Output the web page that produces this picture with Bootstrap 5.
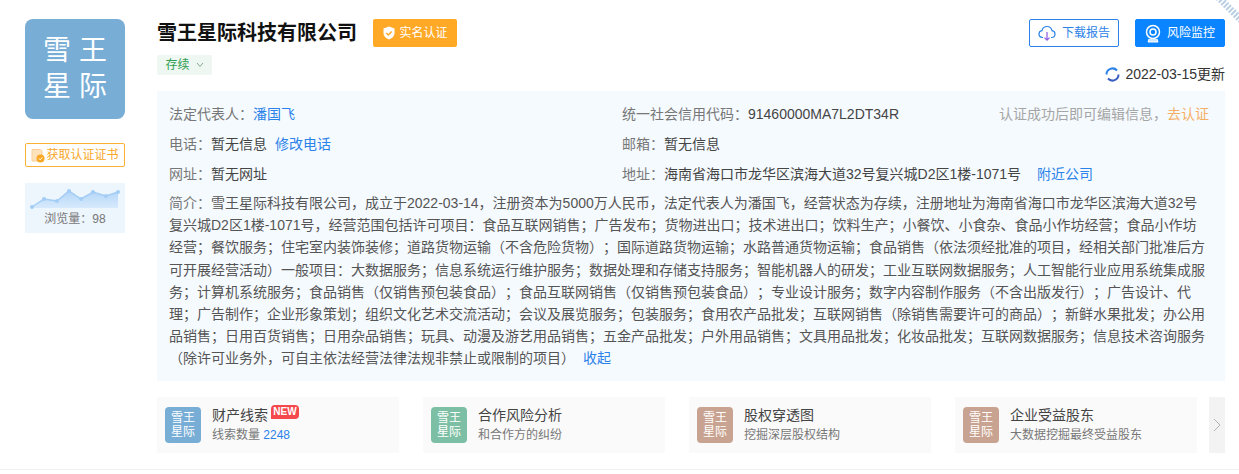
<!DOCTYPE html>
<html lang="zh-CN">
<head>
<meta charset="UTF-8" />
<title>雪王星际科技有限公司</title>
<meta name="viewport" content="width=device-width, initial-scale=1" />
<link href="https://cdn.jsdelivr.net/npm/bootstrap@5.3.0/dist/css/bootstrap.min.css" rel="stylesheet" />
<style>
  body { font-family: "Liberation Sans", "Noto Sans CJK SC", sans-serif; font-size: 14px; color: #444; background: #fff; overflow: hidden; text-spacing-trim: space-all; }
  a { color: #2b82e8; text-decoration: none; }
  .page-wrap { padding: 19px 14px 0 25px; gap: 32px; height: 470px; border-bottom: 1px solid #f0f0f0; }
  .side-col { width: 100px; flex: none; }
  .main-col { min-width: 0; }
  .co-logo { width: 100px; height: 100px; border-radius: 8px; background: #78add6; color: #fff; font-size: 28px; line-height: 36px; }
  .cert-btn { margin-top: 24px; height: 24px; border: 1px solid #f9b233; border-radius: 2px; color: #f9a825; font-size: 12px; background: #fff; gap: 1px; }
  .view-box { margin-top: 16px; height: 50px; background: #edf5fd; font-size: 12px; color: #777; }
  .view-box svg { display: block; }
  .head-row { height: 72px; }
  .co-title { font-size: 20px; font-weight: 700; color: #111; line-height: 28px; margin: 0; }
  .real-tag { width: 84px; height: 28px; background: #ffa927; border-radius: 2px; color: #fff; font-size: 12px; margin-left: 16px; gap: 3px; }
  .state-tag { width: 55px; height: 20px; margin-top: 8px; background: #eef7f1; color: #2f9e52; font-size: 12px; gap: 6px; border-radius: 2px; }
  .act-btn { width: 90px; height: 28px; padding: 0; border-radius: 2px; font-size: 12px; gap: 6px; }
  .act-line { color: #2b82e8; border: 1px solid #2b82e8; background: #fff; }
  .act-fill { color: #fff; border: 1px solid #0a84ff; background: #0a84ff; }
  .act-line:hover { color: #2b82e8; background: #fff; border-color: #2b82e8; }
  .act-fill:hover { color: #fff; background: #0a84ff; border-color: #0a84ff; }
  .update-line { margin-top: 17px; line-height: 20px; font-size: 14px; gap: 5px; color: #333; }
  .info-panel { height: 290px; background: #f5faff; padding: 8px 16px 0 12px; }
  .info-row { height: 30px; line-height: 30px; }
  .info-left { width: 453px; flex: none; }
  .lbl { color: #777; }
  .edit-hint { color: #a5a5a5; }
  .edit-hint span { color: #f5b066; }
  .intro-text { line-height: 22.2px; margin-top: 3px; color: #555; white-space: nowrap; }
  .tool-row { margin-top: 16px; gap: 24px; }
  .tool-card { width: 242px; height: 56px; background: #fafafa; padding-left: 8px; gap: 11px; position: relative; }
  .mini-logo { width: 36px; height: 36px; flex: none; border-radius: 4px; color: #fff; font-size: 12px; line-height: 14.5px; text-align: center; }
  .tone-blue { background: #78add6; }
  .tone-green { background: #7dbfa4; }
  .tone-tan { background: #c9a391; }
  .tool-name { font-size: 14px; line-height: 20px; color: #444; }
  .tool-sub { font-size: 12px; line-height: 20px; color: #777; }
  .new-flag { position: absolute; left: 114px; top: 8px; width: 28px; height: 14px; background: #f4484d; color: #fff; font-size: 10px; font-weight: 700; line-height: 14px; text-align: center; border-radius: 4px 4px 4px 0; }
  .more-arrow { width: 16px; height: 56px; margin-left: -12px; background: #f3f3f3; }
  .stamp { position: absolute; right: -6px; top: -6px; }
</style>
</head>
<body>
  <svg class="stamp" width="30" height="30" viewBox="0 0 30 30"><path d="M3 3 L27 27" stroke="#b9cfe4" stroke-width="7" stroke-dasharray="2 1.5" fill="none"/></svg>

  <div class="page-wrap d-flex">
    <!-- 左侧 logo -->
    <div class="side-col">
      <div class="co-logo d-flex flex-column align-items-center justify-content-center"><div>雪 王</div><div>星 际</div></div>
      <div class="cert-btn d-flex align-items-center justify-content-center">
        <svg width="14" height="15" viewBox="0 0 14 15"><path d="M1 1.500 h8.500 l1.500 1.500 v10 h-10 z" fill="#fde3bd" stroke="#f9cf94"/><circle cx="9.500" cy="10.500" r="4" fill="#f9a825"/><path d="M7.800 10.500 l1.300 1.300 l2.200 -2.300" stroke="#fff" fill="none"/></svg>
        <span>获取认证证书</span>
      </div>
      <div class="view-box text-center">
        <svg width="100" height="27" viewBox="0 0 100 27">
          <defs><linearGradient id="areaFill" x1="0" y1="0" x2="0" y2="1"><stop offset="0" stop-color="#b3d6f8"/><stop offset="1" stop-color="#d8eafc"/></linearGradient></defs>
          <path d="M7 24 L19 16 L32 18 L44 8 L56 16 L68 9 L81 13 L93 9 V25 H7 Z" fill="url(#areaFill)"/>
          <path d="M7 24 L19 16 L32 18 L44 8 L56 16 L68 9 L81 13 L93 9" fill="none" stroke="#a3cdf5" stroke-width="1.500"/>
          <g fill="#a3cdf5"><circle cx="7" cy="24" r="2"/><circle cx="19" cy="16" r="2"/><circle cx="32" cy="18" r="2"/><circle cx="44" cy="8" r="2"/><circle cx="56" cy="16" r="2"/><circle cx="68" cy="9" r="2"/><circle cx="81" cy="13" r="2"/><circle cx="93" cy="9" r="2"/></g>
        </svg>
        <div>浏览量：98</div>
      </div>
    </div>

    <div class="main-col flex-grow-1">
      <!-- 标题 -->
      <div class="head-row d-flex justify-content-between">
        <div>
          <div class="d-flex align-items-center">
            <h1 class="co-title">雪王星际科技有限公司</h1>
            <div class="real-tag d-flex align-items-center justify-content-center">
              <svg width="14" height="14" viewBox="0 0 14 14"><path d="M7 .5 L12.500 2.500 V7 C12.500 10.500 9.500 12.500 7 13.500 C4.500 12.500 1.500 10.500 1.500 7 V2.500 Z" fill="#fff"/><path d="M4.300 7 l2 2 l3.400 -3.600" stroke="#ffa927" stroke-width="1.500" fill="none"/></svg>
              <span>实名认证</span>
            </div>
          </div>
          <div class="state-tag d-flex align-items-center justify-content-center">
            <span>存续</span>
            <svg width="8" height="6" viewBox="0 0 8 6"><path d="M1 1 L4 4.500 L7 1" stroke="#7fa98d" fill="none"/></svg>
          </div>
        </div>
        <div>
          <div class="d-flex justify-content-end gap-3">
            <button class="btn act-btn act-line d-flex align-items-center justify-content-center">
              <svg width="18" height="17" viewBox="0 0 18 17"><path d="M5 12.500 H4.500 C2.500 12.500 1 11 1 9 C1 7.200 2.300 5.800 4 5.600 C4.500 3.200 6.500 1.500 9 1.500 C11.500 1.500 13.500 3.200 14 5.600 C15.700 5.800 17 7.200 17 9 C17 11 15.500 12.500 13.500 12.500 H13" stroke="#2b82e8" stroke-width="1.200" fill="none"/><path d="M9 7 V15 M6.500 12.700 L9 15.200 L11.500 12.700" stroke="#8a5ce0" stroke-width="1.200" fill="none"/></svg>
              <span>下载报告</span>
            </button>
            <button class="btn act-btn act-fill d-flex align-items-center justify-content-center">
              <svg width="16" height="19" viewBox="0 0 16 19"><circle cx="8" cy="8" r="6.500" fill="none" stroke="#fff" stroke-width="1.500"/><circle cx="8" cy="8" r="3" fill="none" stroke="#fff" stroke-width="1.500"/><path d="M4 15 L3 18 H13 L12 15" fill="#cfe6ff" stroke="#fff"/></svg>
              <span>风险监控</span>
            </button>
          </div>
          <div class="update-line d-flex justify-content-end align-items-center">
            <svg width="15" height="15" viewBox="0 0 15 15"><path d="M1.500 7.500 A6 6 0 0 1 12 3.500" stroke="#2b82e8" stroke-width="2" fill="none"/><path d="M13.500 7.500 A6 6 0 0 1 3 11.500" stroke="#3b5fc0" stroke-width="2" fill="none"/></svg>
            <span>2022-03-15更新</span>
          </div>
        </div>
      </div>

      <!-- 基本信息 -->
      <div class="info-panel">
        <div class="info-row d-flex">
          <div class="info-left"><span class="lbl">法定代表人：</span><a href="#">潘国飞</a></div>
          <div class="flex-grow-1"><span class="lbl">统一社会信用代码：</span>91460000MA7L2DT34R</div>
          <div class="edit-hint">认证成功后即可编辑信息，<span>去认证</span></div>
        </div>
        <div class="info-row d-flex">
          <div class="info-left"><span class="lbl">电话：</span>暂无信息<a href="#" class="ms-2">修改电话</a></div>
          <div class="flex-grow-1"><span class="lbl">邮箱：</span>暂无信息</div>
        </div>
        <div class="info-row d-flex">
          <div class="info-left"><span class="lbl">网址：</span>暂无网址</div>
          <div class="flex-grow-1"><span class="lbl">地址：</span>海南省海口市龙华区滨海大道32号复兴城D2区1楼-1071号<a href="#" class="addr-link ms-3">附近公司</a></div>
        </div>
        <div class="intro-text">
          <span class="lbl">简介：</span>雪王星际科技有限公司，成立于2022-03-14，注册资本为5000万人民币，法定代表人为潘国飞，经营状态为存续，注册地址为海南省海口市龙华区滨海大道32号<br>
          复兴城D2区1楼-1071号，经营范围包括许可项目：食品互联网销售；广告发布；货物进出口；技术进出口；饮料生产；小餐饮、小食杂、食品小作坊经营；食品小作坊<br>
          经营；餐饮服务；住宅室内装饰装修；道路货物运输（不含危险货物）；国际道路货物运输；水路普通货物运输；食品销售（依法须经批准的项目，经相关部门批准后方<br>
          可开展经营活动）一般项目：大数据服务；信息系统运行维护服务；数据处理和存储支持服务；智能机器人的研发；工业互联网数据服务；人工智能行业应用系统集成服<br>
          务；计算机系统服务；食品销售（仅销售预包装食品）；食品互联网销售（仅销售预包装食品）；专业设计服务；数字内容制作服务（不含出版发行）；广告设计、代<br>
          理；广告制作；企业形象策划；组织文化艺术交流活动；会议及展览服务；包装服务；食用农产品批发；互联网销售（除销售需要许可的商品）；新鲜水果批发；办公用<br>
          品销售；日用百货销售；日用杂品销售；玩具、动漫及游艺用品销售；五金产品批发；户外用品销售；文具用品批发；化妆品批发；互联网数据服务；信息技术咨询服务<br>
          （除许可业务外，可自主依法经营法律法规非禁止或限制的项目）<a href="#" class="ms-2">收起</a>
        </div>
      </div>

      <!-- 工具入口 -->
      <div class="tool-row d-flex">
        <div class="tool-card d-flex align-items-center">
          <div class="mini-logo tone-blue d-flex align-items-center justify-content-center">雪王<br>星际</div>
          <div><div class="tool-name">财产线索</div><div class="tool-sub">线索数量 <a href="#">2248</a></div></div>
          <span class="new-flag">NEW</span>
        </div>
        <div class="tool-card d-flex align-items-center">
          <div class="mini-logo tone-green d-flex align-items-center justify-content-center">雪王<br>星际</div>
          <div><div class="tool-name">合作风险分析</div><div class="tool-sub">和合作方的纠纷</div></div>
        </div>
        <div class="tool-card d-flex align-items-center">
          <div class="mini-logo tone-tan d-flex align-items-center justify-content-center">雪王<br>星际</div>
          <div><div class="tool-name">股权穿透图</div><div class="tool-sub">挖掘深层股权结构</div></div>
        </div>
        <div class="tool-card d-flex align-items-center">
          <div class="mini-logo tone-tan d-flex align-items-center justify-content-center">雪王<br>星际</div>
          <div><div class="tool-name">企业受益股东</div><div class="tool-sub">大数据挖掘最终受益股东</div></div>
        </div>
        <div class="more-arrow d-flex align-items-center justify-content-center">
          <svg width="8" height="14" viewBox="0 0 8 14"><path d="M1 1 L7 7 L1 13" stroke="#b5b5b5" fill="none"/></svg>
        </div>
      </div>
    </div>
  </div>
</body>
</html>
